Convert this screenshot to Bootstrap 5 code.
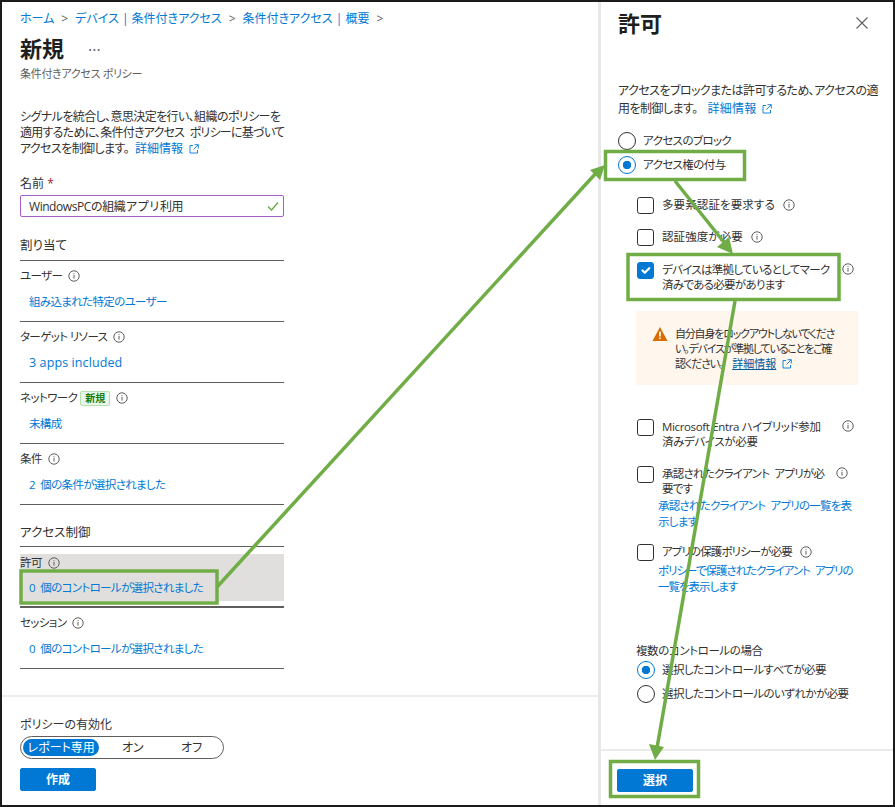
<!DOCTYPE html>
<html lang="ja">
<head>
<meta charset="UTF-8">
<title>条件付きアクセス ポリシー</title>
<link href="https://cdn.jsdelivr.net/npm/bootstrap@5.3.0/dist/css/bootstrap.min.css" rel="stylesheet">
<style>
html, body { height: 807px; overflow: hidden; background: #fff; }
body { font-family: "Open Sans", "Noto Sans CJK JP", sans-serif; font-feature-settings: "palt"; font-size: 12px; line-height: 16px; color: #323130; }
a { color: #0078d4; text-decoration: none; }
.frame { width: 895px; height: 807px; border: 2px solid #1a1a1a; display: flex; position: relative; background: #fff; }
.left { width: 596px; flex: none; display: flex; flex-direction: column; }
.left-main { flex: 1 1 auto; padding: 9px 0 0 18px; }
.col-form { width: 264px; }
.crumbs { --bs-breadcrumb-margin-bottom: 0; --bs-breadcrumb-item-padding-x: 7px; --bs-breadcrumb-divider-color: #605e5c; white-space: nowrap; flex-wrap: nowrap; width: 400px; height: 16px; }
.page-title { font-size: 22px; line-height: 30px; font-weight: 700; margin: 6px 0 0; color: #201f1e; }
.dots { color: #605e5c; margin-left: 24px; position: relative; top: -6px; }
.sub { font-size: 11px; color: #605e5c; line-height: 14px; margin-top: 1px; letter-spacing: -.3px; }
.intro { margin: 28px 0 0; line-height: 16px; width: 264px; letter-spacing: -.6px; white-space: nowrap; }
.intro .l2 { letter-spacing: -.75px; word-spacing: 3px; }
.intro a { margin-left: 6px; letter-spacing: 0; }
.ext { width: 10px; height: 10px; margin-left: 6px; color: #0078d4; vertical-align: -1px; }
.info { width: 12px; height: 12px; margin-left: 6px; color: #605e5c; vertical-align: -2px; }
.field-label { margin-top: 19px; line-height: 16px; }
.req { color: #a4262c; }
.name-box { position: relative; margin-top: 3px; }
.name-box .form-control { height: 22px; padding: 0 20px 0 8px; border: 1px solid #a45fc4; border-radius: 2px; font-size: 12px; letter-spacing: -.45px; color: #323130; box-shadow: none; }
.name-box svg { position: absolute; right: 5px; top: 5px; width: 12px; height: 12px; color: #5fa83c; }
.group-head { font-size: 12.5px; line-height: 18px; padding-bottom: 6px; border-bottom: 1px solid #605e5c; }
.head-assign { margin-top: 20px; padding-bottom: 5px; }
.head-access { margin-top: 19px; padding-bottom: 4px; }
.sec { height: 61px; padding-top: 6px; border-bottom: 1px solid #605e5c; }
.sec .lbl { height: 18px; line-height: 18px; font-size: 11.5px; letter-spacing: -.6px; }
.sec .val { display: block; margin: 8px 0 0 9px; height: 18px; line-height: 18px; font-size: 11.5px; letter-spacing: -.65px; word-spacing: 3px; }
.sec .val.lat { font-size: 12.5px; letter-spacing: .1px; word-spacing: 0; }
.sec-active { padding-top: 7px; border-bottom-width: 2px; }
.sec-active > div { background: #e1dfdd; height: 47px; }
.sec-active .val { margin-top: 7px; }
.tag { display: inline-block; border: 1px solid #b7e0b0; background: #eaf7e8; color: #107c10; font-size: 10px; line-height: 13px; padding: 0 4px; border-radius: 2px; margin-left: 3px; font-weight: 700; letter-spacing: 0; }
.left-foot { height: 110px; flex: none; border-top: 2px solid #edebe9; padding: 20px 0 0 18px; }
.toggle { width: 204px; height: 23px; border: 1px solid #605e5c; padding: 2px; margin-top: 3px; }
.toggle span { display: block; height: 17px; line-height: 17px; text-align: center; }
.toggle .on { width: 78px; background: #0078d4; color: #fff; }
.toggle .mid { width: 60px; }
.btn-az { width: 76px; height: 23px; padding: 0; background: #0078d4; border: 1px solid #0078d4; border-radius: 2px; color: #fff; font-size: 12px; font-weight: 700; line-height: 20px; }
.left-foot .btn-az { margin-top: 9px; }
.right { width: 295px; flex: none; border-left: 3px solid #e8e8e8; display: flex; flex-direction: column; }
.right-main { flex: 1 1 auto; padding: 6px 0 0 17px; }
.blade-head { height: 30px; padding-right: 25px; }
.blade-head h2 { font-size: 22px; line-height: 30px; font-weight: 700; margin: 0; color: #201f1e; }
.blade-intro { margin: 44px 0 11px; line-height: 18px; width: 262px; letter-spacing: -.55px; }
.blade-intro a { margin-left: 10px; letter-spacing: .2px; }
.opt { display: flex; align-items: center; gap: 7px; height: 24px; font-size: 11.5px; letter-spacing: -.6px; }
.opt-sub { margin-left: 19px; letter-spacing: -.55px; }
.form-check-input { margin: 0; flex: none; background-color: #fff; }
.rd { width: 18px; height: 18px; border: 1.5px solid #323130; }
.rd:checked { background-color: #fff; border-color: #0078d4; background-image: radial-gradient(circle, #0078d4 0 4px, transparent 4.5px); }
.ck { width: 17px; height: 17px; border: 1.5px solid #323130; border-radius: 2px; }
.ck:checked { background-color: #0078d4; border-color: #0078d4; }
.ck-row { display: flex; align-items: flex-start; gap: 8px; margin-left: 19px; width: 245px; line-height: 15px; font-size: 11.5px; letter-spacing: -.35px; }
.ck-row .info { margin-left: 8px; }
.ck-row > .info { margin: 1px 0 0; }
.ck-row .t { width: 172px; white-space: nowrap; }
.ck-row .t-narrow { width: 166px; letter-spacing: -.75px; word-spacing: 3px; }
.ck-row .t-mark { letter-spacing: -.7px; }
.ck-row.wide { letter-spacing: .1px; }
.ck-row.tight { letter-spacing: -.9px; }
.gap-first { margin-top: 20px; }
.gap-15 { margin-top: 15px; }
.gap-16 { margin-top: 16px; }
.gap-17 { margin-top: 17px; }
.gap-34 { margin-top: 34px; }
.gap-14 { margin-top: 14px; }
.sublink { display: block; margin: 2px 0 0 40px; width: 196px; line-height: 16px; font-size: 11.5px; letter-spacing: -.75px; word-spacing: 3px; white-space: nowrap; }
.sublink.tight { letter-spacing: -1px; }
.warn { width: 222px; height: 74px; margin: 19px 0 0 18px; background: #fff6ee; display: flex; padding: 15px 0 0 16px; line-height: 15px; font-size: 11px; letter-spacing: -1.2px; white-space: nowrap; }
.warn > svg { width: 16px; height: 16px; flex: none; margin-right: 7px; }
.warn a { margin-left: 9px; letter-spacing: 0; }
.warn u { color: #005a9e; }
.multi-head { margin: 48px 0 -1px 18px; font-size: 11.5px; letter-spacing: -.4px; }
.right-foot { height: 56px; flex: none; border-top: 2px solid #edebe9; padding: 18px 0 0 16px; }
.overlay { position: absolute; left: -2px; top: -2px; width: 895px; height: 807px; pointer-events: none; }
</style>
</head>
<body>
<svg width="0" height="0" class="d-block position-absolute">
  <symbol id="i-info" viewBox="0 0 12 12"><circle cx="6" cy="6" r="5.2" fill="none" stroke="currentColor"/><rect x="5.5" y="5" width="1" height="3.6" fill="currentColor"/><rect x="5.5" y="3.2" width="1" height="1" fill="currentColor"/></symbol>
  <symbol id="i-ext" viewBox="0 0 10 10"><path d="M4 1.5H1v7.5h7.5V6M5.5.7h3.8v3.8M9.2.8 4.5 5.5" fill="none" stroke="currentColor" stroke-width=".9"/></symbol>
</svg>

<div class="frame">
  <div class="left">
    <div class="left-main">
      <ol class="breadcrumb crumbs" style="--bs-breadcrumb-divider: '>';">
        <li class="breadcrumb-item"><a href="#">ホーム</a></li>
        <li class="breadcrumb-item"><a href="#">デバイス | 条件付きアクセス</a></li>
        <li class="breadcrumb-item"><a href="#">条件付きアクセス | 概要</a></li>
        <li class="breadcrumb-item"></li>
      </ol>
      <h1 class="page-title">新規<span class="dots fs-6 fw-normal">...</span></h1>
      <div class="sub">条件付きアクセス ポリシー</div>
      <div class="col-form">
        <p class="intro">シグナルを統合し、意思決定を行い、組織のポリシーを<br><span class="l2">適用するために、条件付きアクセス ポリシーに基づいて</span><br>アクセスを制御します。<a href="#">詳細情報<svg class="ext"><use href="#i-ext"/></svg></a></p>
        <div class="field-label">名前 <span class="req">*</span></div>
        <div class="name-box">
          <input class="form-control" type="text" value="WindowsPCの組織アプリ利用">
          <svg viewBox="0 0 12 12"><path d="M1 6.5 4.5 10 11 2.5" fill="none" stroke="currentColor" stroke-width="1.2"/></svg>
        </div>
        <div class="group-head head-assign">割り当て</div>
        <div class="sec">
          <div class="lbl">ユーザー<svg class="info"><use href="#i-info"/></svg></div>
          <a class="val" href="#">組み込まれた特定のユーザー</a>
        </div>
        <div class="sec">
          <div class="lbl">ターゲット リソース<svg class="info"><use href="#i-info"/></svg></div>
          <a class="val lat" href="#">3 apps included</a>
        </div>
        <div class="sec">
          <div class="lbl">ネットワーク<span class="tag">新規</span><svg class="info"><use href="#i-info"/></svg></div>
          <a class="val" href="#">未構成</a>
        </div>
        <div class="sec">
          <div class="lbl">条件<svg class="info"><use href="#i-info"/></svg></div>
          <a class="val" href="#">2 個の条件が選択されました</a>
        </div>
        <div class="group-head head-access">アクセス制御</div>
        <div class="sec sec-active">
          <div>
            <div class="lbl">許可<svg class="info"><use href="#i-info"/></svg></div>
            <a class="val" href="#">0 個のコントロールが選択されました</a>
          </div>
        </div>
        <div class="sec">
          <div class="lbl">セッション<svg class="info"><use href="#i-info"/></svg></div>
          <a class="val" href="#">0 個のコントロールが選択されました</a>
        </div>
      </div>
    </div>
    <div class="left-foot">
      <div>ポリシーの有効化</div>
      <div class="toggle d-flex rounded-pill">
        <span class="on rounded-pill">レポート専用</span>
        <span class="mid ms-1">オン</span>
        <span class="mid">オフ</span>
      </div>
      <button class="btn btn-az d-block" type="button">作成</button>
    </div>
  </div>

  <div class="right">
    <div class="right-main">
      <div class="blade-head d-flex justify-content-between align-items-center">
        <h2>許可</h2>
        <svg width="12" height="12" viewBox="0 0 12 12"><path d="M.5.5l11 11M11.5.5l-11 11" stroke="#605e5c" stroke-width="1.1"/></svg>
      </div>
      <p class="blade-intro">アクセスをブロックまたは許可するため、アクセスの適用を制御します。<a href="#">詳細情報<svg class="ext"><use href="#i-ext"/></svg></a></p>
      <label class="opt"><input class="form-check-input rd" type="radio" name="access">アクセスのブロック</label>
      <label class="opt"><input class="form-check-input rd" type="radio" name="access" checked>アクセス権の付与</label>

      <label class="ck-row wide gap-first"><input class="form-check-input ck" type="checkbox"><span>多要素認証を要求する<svg class="info"><use href="#i-info"/></svg></span></label>
      <label class="ck-row wide gap-15"><input class="form-check-input ck" type="checkbox"><span>認証強度が必要<svg class="info"><use href="#i-info"/></svg></span></label>
      <label class="ck-row gap-16"><input class="form-check-input ck" type="checkbox" checked><span class="t t-mark">デバイスは準拠しているとしてマーク<br>済みである必要があります</span><svg class="info"><use href="#i-info"/></svg></label>

      <div class="warn">
        <svg viewBox="0 0 16 16"><path d="M8 1 15.5 15H.5Z" fill="#d96c00"/><rect x="7.2" y="5.5" width="1.6" height="5" fill="#fff"/><rect x="7.2" y="11.5" width="1.6" height="1.6" fill="#fff"/></svg>
        <div>自分自身をロックアウトしないでくださ<br>い。デバイスが準拠していることをご確<br>認ください。<a href="#"><u>詳細情報</u><svg class="ext"><use href="#i-ext"/></svg></a></div>
      </div>

      <label class="ck-row gap-34"><input class="form-check-input ck" type="checkbox"><span class="t">Microsoft Entra ハイブリッド参加<br>済みデバイスが必要</span><svg class="info"><use href="#i-info"/></svg></label>
      <label class="ck-row gap-17"><input class="form-check-input ck" type="checkbox"><span class="t t-narrow">承認されたクライアント アプリが必<br>要です</span><svg class="info"><use href="#i-info"/></svg></label>
      <a class="sublink" href="#">承認されたクライアント アプリの一覧を表<br>示します</a>
      <label class="ck-row tight gap-14"><input class="form-check-input ck" type="checkbox"><span>アプリの保護ポリシーが必要<svg class="info"><use href="#i-info"/></svg></span></label>
      <a class="sublink tight" href="#">ポリシーで保護されたクライアント アプリの<br>一覧を表示します</a>

      <div class="multi-head">複数のコントロールの場合</div>
      <label class="opt opt-sub"><input class="form-check-input rd" type="radio" name="multi" checked>選択したコントロールすべてが必要</label>
      <label class="opt opt-sub"><input class="form-check-input rd" type="radio" name="multi">選択したコントロールのいずれかが必要</label>
    </div>
    <div class="right-foot">
      <button class="btn btn-az" type="button">選択</button>
    </div>
  </div>

  <svg class="overlay" viewBox="0 0 895 807">
    <g fill="none" stroke="#70ad47" stroke-width="3.5">
      <rect x="21" y="571" width="196" height="32"/>
      <rect x="605.5" y="151.5" width="139" height="28"/>
      <rect x="628" y="254.5" width="211" height="45"/>
      <rect x="610.5" y="761.5" width="88" height="35"/>
      <path d="M217 587 597 172"/>
      <path d="M675 181 727 246"/>
      <path d="M735 301 657 748"/>
    </g>
    <g fill="#70ad47">
      <path d="M605 165 590 170 600 180Z"/>
      <path d="M733 254 717 247 729 237Z"/>
      <path d="M655 760 649 744 664 747Z"/>
    </g>
  </svg>
</div>
<script src="https://cdn.jsdelivr.net/npm/bootstrap@5.3.0/dist/js/bootstrap.bundle.min.js"></script>
</body>
</html>
